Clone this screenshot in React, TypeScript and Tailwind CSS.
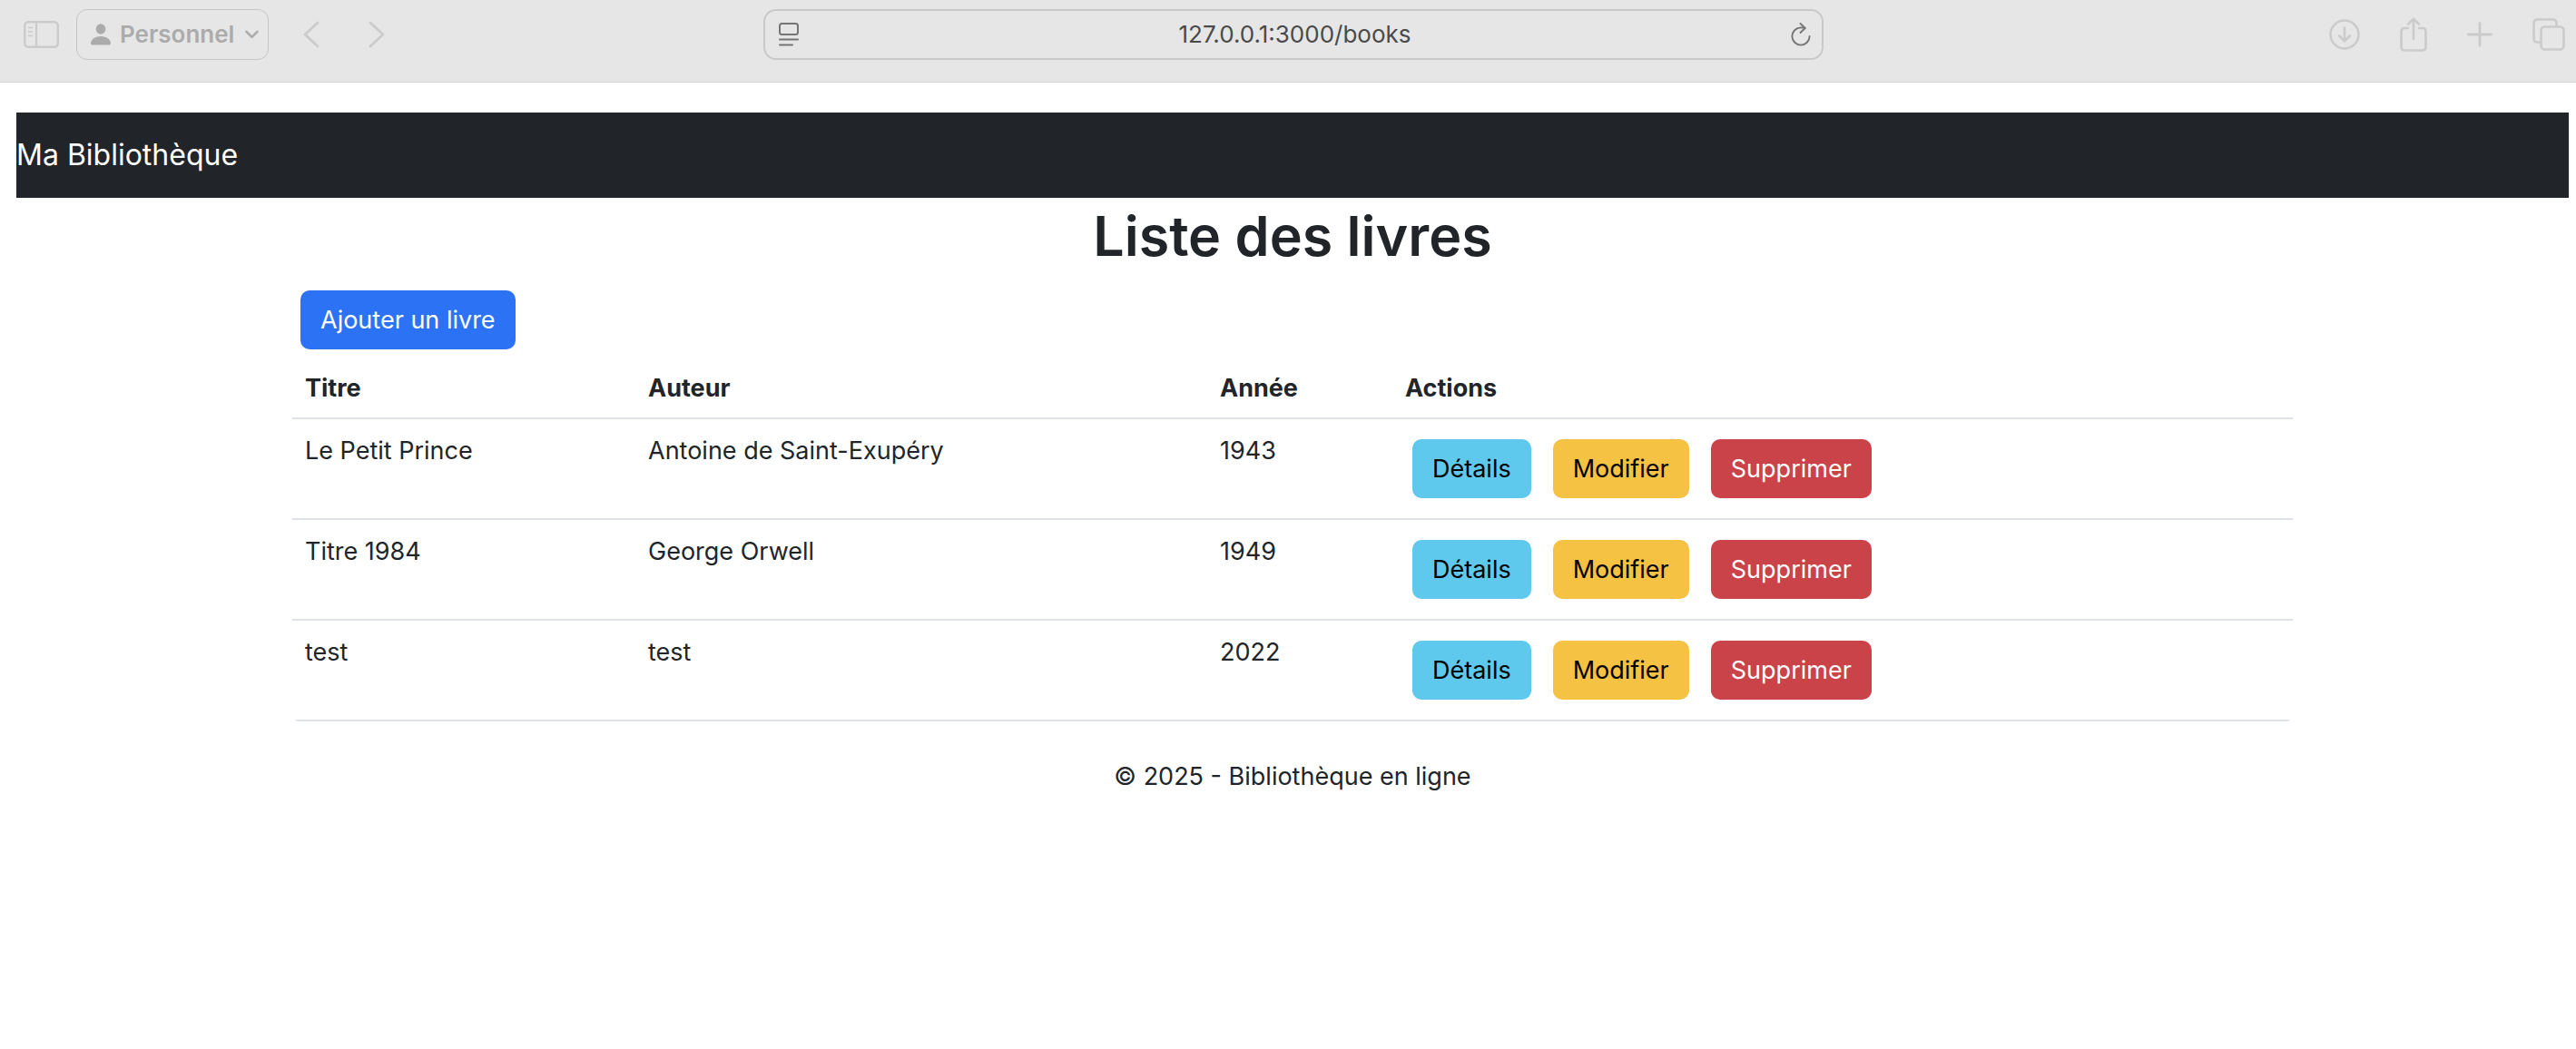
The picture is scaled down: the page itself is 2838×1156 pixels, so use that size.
import React from "react";

type Book = { title: string; author: string; year: number };

const books: Book[] = [
  { title: "Le Petit Prince", author: "Antoine de Saint-Exupéry", year: 1943 },
  { title: "Titre 1984", author: "George Orwell", year: 1949 },
  { title: "test", author: "test", year: 2022 },
];

function SidebarIcon() {
  return (
    <svg width="40" height="30" viewBox="0 0 40 30" fill="none" stroke="currentColor">
      <rect x="1.200" y="1.200" width="36.600" height="27.600" rx="4" strokeWidth="2.400" />
      <path d="M14 1v28" strokeWidth="2.200" />
      <path d="M5.500 7.500h4M5.500 12h4M5.500 16.500h4" strokeWidth="1.600" strokeLinecap="round" />
    </svg>
  );
}

function PersonIcon() {
  return (
    <svg width="22" height="24" viewBox="0 0 22 24" fill="currentColor">
      <ellipse cx="11" cy="6" rx="5.300" ry="5.800" />
      <path d="M2.500 23.500C1 23.500 0 22.800 0 21.400 0 18.200 4 14 11 14s11 4.200 11 7.400c0 1.400-1 2.100-2.500 2.100z" />
    </svg>
  );
}

function SmallChevron() {
  return (
    <svg width="15" height="10" viewBox="0 0 15 10" fill="none" stroke="currentColor" strokeWidth="2.600" strokeLinecap="round" strokeLinejoin="round">
      <path d="M1.500 1.800l6 6 6-6" />
    </svg>
  );
}

function Chevron({ forward = false }: { forward?: boolean }) {
  return (
    <svg width="18" height="30" viewBox="0 0 18 30" fill="none" stroke="currentColor" strokeWidth="2.800" strokeLinecap="round" strokeLinejoin="round">
      <path d={forward ? "M2 2l14 13L2 28" : "M16 2L2 15l14 13"} />
    </svg>
  );
}

function ReaderIcon() {
  return (
    <svg width="22" height="26" viewBox="0 0 22 26" fill="none" stroke="currentColor" strokeWidth="2" strokeLinecap="round">
      <rect x="1" y="1" width="20" height="12" rx="2.500" />
      <path d="M1 18.500h20M1 24.500h14" />
    </svg>
  );
}

function ReloadIcon() {
  return (
    <svg width="22" height="26" viewBox="0 0 22 26" fill="none" stroke="currentColor" strokeWidth="1.900" strokeLinecap="round" strokeLinejoin="round">
      <path d="M20.600 15A9.600 9.600 0 1 1 11 5.400q2.500 0 4.600.5" />
      <path d="M10.500 1l5.200 5-5.200 5" />
    </svg>
  );
}

function DownloadIcon() {
  return (
    <svg width="34" height="34" viewBox="0 0 34 34" fill="none" stroke="currentColor" strokeLinecap="round" strokeLinejoin="round">
      <circle cx="17" cy="17" r="15.500" strokeWidth="2.500" />
      <path d="M17 9.500v14.500M11.200 18.500l5.800 5.800 5.800-5.800" strokeWidth="2.600" />
    </svg>
  );
}

function ShareIcon() {
  return (
    <svg width="30" height="38" viewBox="0 0 30 38" fill="none" stroke="currentColor" strokeWidth="2.600" strokeLinecap="round" strokeLinejoin="round">
      <path d="M10 12H5.500Q1.500 12 1.500 16v16.500q0 4 4 4h19q4 0 4-4V16q0-4-4-4H20" strokeLinecap="butt" />
      <path d="M15 24V2M9 7.600L15 1.800l6 5.800" />
    </svg>
  );
}

function PlusIcon() {
  return (
    <svg width="28" height="28" viewBox="0 0 28 28" fill="none" stroke="currentColor" strokeWidth="2.800" strokeLinecap="round">
      <path d="M14 1.500v25M1.500 14h25" />
    </svg>
  );
}

function TabsIcon() {
  return (
    <svg width="36" height="36" viewBox="0 0 36 36" fill="none" stroke="currentColor" strokeWidth="2.600">
      <rect x="9.500" y="9.500" width="25" height="25" rx="4" />
      <path d="M9 26.500H5.500q-4 0-4-4v-17q0-4 4-4h17q4 0 4 4V9" />
    </svg>
  );
}

function BrowserBar() {
  return (
    <header className="grid grid-cols-[7fr_10fr_7fr] items-center border-b border-[#d4d4d4] bg-[#e6e6e6] pt-[10px] pr-3 pb-6 pl-6 text-[#cbcbcb]">
      <div className="flex items-center">
        <button type="button" aria-label="Barre latérale" className="ml-[2px]"><SidebarIcon /></button>
        <button
          type="button"
          className="ml-[18px] flex h-14 items-center rounded-xl border border-[#c4c4c4] pr-[10px] pl-[15px] text-[26px] leading-8 font-semibold text-[#ababab]"
        >
          <PersonIcon />
          <span className="ml-[10px]">Personnel</span>
          <span className="ml-3"><SmallChevron /></span>
        </button>
        <button type="button" aria-label="Page précédente" className="ml-[38px]"><Chevron /></button>
        <button type="button" aria-label="Page suivante" className="ml-[54px]"><Chevron forward /></button>
      </div>
      <div className="flex h-14 items-center rounded-[14px] border-2 border-[#c9c9c9] pr-3 pl-[15px] text-[#757575]">
        <ReaderIcon />
        <input
          type="text"
          aria-label="Adresse"
          readOnly
          value="127.0.0.1:3000/books"
          className="min-w-0 flex-1 bg-transparent text-center text-[26px] leading-8 text-[#4a4a4a] outline-none"
        />
        <button type="button" aria-label="Recharger"><ReloadIcon /></button>
      </div>
      <div className="flex items-center justify-end gap-11">
        <button type="button" aria-label="Téléchargements"><DownloadIcon /></button>
        <button type="button" aria-label="Partager"><ShareIcon /></button>
        <button type="button" aria-label="Nouvel onglet"><PlusIcon /></button>
        <button type="button" aria-label="Onglets"><TabsIcon /></button>
      </div>
    </header>
  );
}

const button = "inline-block rounded-[10px] px-[22px] py-3 leading-[41px]";

export default function App() {
  return (
    <div className="min-h-screen bg-white font-['Inter','Liberation_Sans',sans-serif] text-[27px] leading-[41px] text-[#212529]">
      <BrowserBar />
      <div className="mt-[33px] mr-2 ml-[18px]">
        <nav className="bg-[#212529] py-[21px]">
          <a href="#" className="block w-fit text-[32px] leading-[52px] text-white">Ma Bibliothèque</a>
        </nav>
        <main className="mx-auto w-full max-w-[2204px]">
          <h1 className="text-center text-[61px] leading-[84px] font-semibold">Liste des livres</h1>
          <a href="#" className={button + " mt-[18px] ml-[9px] bg-[#2c72f5] text-white"}>Ajouter un livre</a>
          <div className="mt-[7px] overflow-hidden rounded-b-lg">
            <table className="w-full table-fixed border-separate border-spacing-0 text-left">
              <colgroup>
                <col className="w-[378px]" />
                <col className="w-[630px]" />
                <col className="w-[204px]" />
                <col />
              </colgroup>
              <thead>
                <tr>
                  {["Titre", "Auteur", "Année", "Actions"].map((label) => (
                    <th key={label} scope="col" className="border-b-2 border-[#dee2e6] px-[14px] pt-[15px] pb-3 font-bold">{label}</th>
                  ))}
                </tr>
              </thead>
              <tbody className="[&_td]:border-b-2 [&_td]:border-[#dee2e6] [&_td]:px-[14px] [&_td]:pt-[14px] [&_td]:pb-[13px] [&_td]:align-top">
                {books.map((book) => (
                  <tr key={book.title}>
                    <td>{book.title}</td>
                    <td>{book.author}</td>
                    <td>{book.year}</td>
                    <td>
                      <div className="mt-2 mb-[9px] ml-2 flex gap-6">
                        <a href="#" className={button + " bg-[#5ec8ed] text-black"}>Détails</a>
                        <a href="#" className={button + " bg-[#f5c244] text-black"}>Modifier</a>
                        <button type="button" className={button + " bg-[#c94349] text-white"}>Supprimer</button>
                      </div>
                    </td>
                  </tr>
                ))}
              </tbody>
            </table>
          </div>
        </main>
        <footer className="mt-10 text-center">© 2025 - Bibliothèque en ligne</footer>
      </div>
    </div>
  );
}
